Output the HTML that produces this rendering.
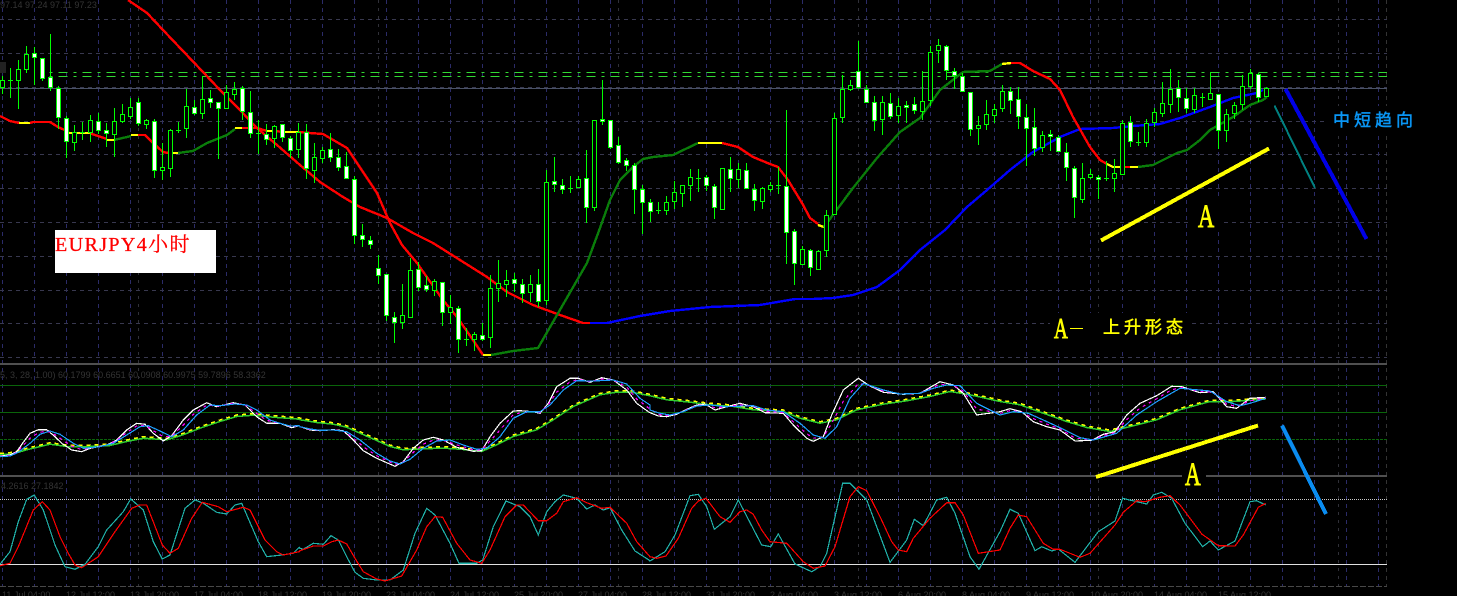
<!DOCTYPE html>
<html><head><meta charset="utf-8"><title>EURJPY</title>
<style>
html,body{margin:0;padding:0;background:#000;width:1457px;height:596px;overflow:hidden}
svg{position:absolute;left:0;top:0;display:block}
.d{font-family:"Liberation Sans",sans-serif;font-size:9px;fill:#343434}
.c{font-family:"Liberation Sans","Noto Sans CJK SC",sans-serif;font-size:17px;letter-spacing:4px;stroke-width:.5px}
</style></head><body>
<svg id="s" width="1457" height="596" viewBox="0 0 1457 596" xmlns="http://www.w3.org/2000/svg">
<rect width="1457" height="596" fill="#000"/>
<g id="grid" shape-rendering="crispEdges"></g>
<g id="ind" fill="none" shape-rendering="crispEdges"></g>
<g id="can" shape-rendering="crispEdges"></g>
<g id="osc" fill="none" shape-rendering="crispEdges"></g>
<text class="d" x="0" y="8">97.14 97.24 97.11 97.23</text>
<text class="d" x="0" y="378">5, 3, 28, 1.00) 60.1799 60.6651 60.0908 60.9975 59.7896 58.3362</text>
<text class="d" x="1" y="489">4.2616 27.1842</text>
<g class="d">
<text x="2" y="598">11 Jul 04:00</text><text x="66" y="598">12 Jul 12:00</text><text x="130" y="598">13 Jul 20:00</text><text x="194" y="598">17 Jul 04:00</text><text x="258" y="598">18 Jul 12:00</text><text x="322" y="598">19 Jul 20:00</text><text x="386" y="598">23 Jul 04:00</text><text x="450" y="598">24 Jul 12:00</text><text x="514" y="598">25 Jul 20:00</text><text x="578" y="598">27 Jul 04:00</text><text x="642" y="598">28 Jul 12:00</text><text x="706" y="598">31 Jul 20:00</text><text x="770" y="598">2 Aug 04:00</text><text x="834" y="598">3 Aug 12:00</text><text x="898" y="598">6 Aug 20:00</text><text x="962" y="598">8 Aug 04:00</text><text x="1026" y="598">9 Aug 12:00</text><text x="1090" y="598">10 Aug 20:00</text><text x="1154" y="598">14 Aug 04:00</text><text x="1218" y="598">15 Aug 12:00</text>
</g>
<rect x="1190" y="200" width="33" height="30" fill="#000"/>
<rect x="1182" y="458" width="24" height="30" fill="#000"/>
<rect x="1050" y="313" width="140" height="37" fill="#000"/>
<rect x="1325" y="106" width="90" height="29" fill="#000"/>
<g stroke-linecap="butt" shape-rendering="crispEdges">
<line x1="1101" y1="240.5" x2="1269" y2="148.5" stroke="#ffff00" stroke-width="4"/>
<line x1="1274.5" y1="105.5" x2="1315" y2="188" stroke="#008080" stroke-width="2"/>
<line x1="1285.5" y1="89" x2="1366.5" y2="239" stroke="#0000e6" stroke-width="4"/>
<line x1="1096" y1="477" x2="1258" y2="425.5" stroke="#ffff00" stroke-width="4"/>
<line x1="1282" y1="425.5" x2="1326" y2="514" stroke="#0a8cf0" stroke-width="4"/>
</g>
<text transform="translate(1198 227) scale(.68 1)" font-family="Liberation Serif" font-size="33" fill="#ffff00" stroke="#ffff00" stroke-width=".9">A</text>
<text transform="translate(1185 485) scale(.66 1)" font-family="Liberation Serif" font-size="33" fill="#ffff00" stroke="#ffff00" stroke-width=".9">A</text>
<text transform="translate(1054 338) scale(.66 1)" font-family="Liberation Serif" font-size="29" fill="#ffff00" stroke="#ffff00" stroke-width=".9">A</text>
<rect x="1070" y="328" width="13" height="1" fill="#ffff00"/>
<text class="c" x="1103" y="333" fill="#ffff00" stroke="#ffff00">上升形态</text>
<text class="c" x="1333" y="126" fill="#0a96f5" stroke="#0a96f5">中短趋向</text>
<rect x="55" y="230" width="161" height="43" fill="#fff"/>
<text x="55" y="251" fill="#f00" stroke="#f00" stroke-width=".3" font-family="'Liberation Serif','Noto Serif CJK SC',serif" font-size="20" letter-spacing="1.4">EURJPY4小时</text>
</svg>
<script>
var NS='http://www.w3.org/2000/svg';
function $(i){return document.getElementById(i)}
function el(p,n,a){var e=document.createElementNS(NS,n);for(var k in a)e.setAttribute(k,a[k]);$(p).appendChild(e);return e}
function R(p,x,y,w,h,f){el(p,'rect',{x:x,y:y,width:w,height:h,fill:f})}
// grid
var i;
for(i=0;i<44;i++){var x=2.5+32*i;if(x<1386)el('grid','line',{x1:x,y1:0,x2:x,y2:586,stroke:'#2b2b68','stroke-dasharray':'4 4'})}
[138.5,378.5,618.5,858.5,1098.5,1338.5].forEach(function(x){el('grid','line',{x1:x,y1:0,x2:x,y2:586,stroke:'#303038','stroke-dasharray':'3 5'})});
el('grid','line',{x1:1386.5,y1:0,x2:1386.5,y2:586,stroke:'#333','stroke-dasharray':'4 4'});
[19,53,87,121,154,188,222,256,290,323,357].forEach(function(y){el('grid','line',{x1:0,y1:y+.5,x2:1387,y2:y+.5,stroke:'#38384f','stroke-dasharray':'4 4'})});
R('grid',0,88,1387,1,'#4a5268');
[72,76].forEach(function(y){el('grid','line',{x1:49.7,y1:y+.5,x2:1387,y2:y+.5,stroke:'#32d932','stroke-dasharray':'3 6 9 6'})});
[363,364,475,476].forEach(function(y){R('grid',0,y,1387,1,'#505050')});
R('grid',0,385,1387,1,'#0a640a');R('grid',0,412,1387,1,'#0a640a');
el('grid','line',{x1:0,y1:439.5,x2:1387,y2:439.5,stroke:'#0a640a','stroke-dasharray':'3 1'});
el('grid','line',{x1:0,y1:499.5,x2:1387,y2:499.5,stroke:'#c8c8c8','stroke-dasharray':'1 1'});
R('grid',0,564,1387,1,'#e0e0e0');
el('grid','line',{x1:0,y1:586.5,x2:1387,y2:586.5,stroke:'#484848','stroke-dasharray':'6 2'});
R('grid',0,62,6,11,'#222');
// moving averages
function L(p,pts,col,w,dash){var a={points:pts.map(function(q){return q[0]+','+q[1]}).join(' '),stroke:col,'stroke-width':w};if(dash)a['stroke-dasharray']=dash;el(p,'polyline',a)}
L('ind',[[128,0],[147,13],[163,30],[182,50],[203,72],[220,90],[240,110],[257,128],[277,145],[300,165],[320,182],[343,197],[360,207],[387,218],[413,233],[433,243],[460,260],[487,277],[507,292],[533,305],[560,315],[583,323],[591,323]],'#f00',2.4);
L('ind',[[590,323],[607,323],[640,316],[670,311],[710,307],[760,305],[795,299],[813,299],[833,298],[853,295],[877,287],[900,270],[920,250],[945,230],[967,207],[987,190],[1010,170],[1033,152],[1060,137],[1080,129],[1113,128],[1133,126],[1160,124],[1180,118],[1210,107],[1233,98],[1257,93],[1263,90]],'#0000ff',2.4);
var R_='#f00',Y='#ff0',G='#0a7d0a';
[
[R_,[[0,116],[10,121],[19,123]]],[Y,[[19,123],[30,123]]],[R_,[[30,123],[33,122],[50,122],[58,127],[69,132]]],[Y,[[69,133],[90,133]]],[R_,[[90,133],[92,134],[107,139]]],[Y,[[107,140],[114,140]]],[G,[[114,140],[127,137],[131,136]]],[Y,[[131,135],[138,135]]],[R_,[[138,135],[145,135],[153,143],[163,152],[168,153]]],[Y,[[168,153],[178,153]]],[G,[[178,153],[193,151],[207,143],[227,135],[235,129]]],[Y,[[235,128],[242,128]]],[R_,[[242,128],[257,128],[267,131]]],[Y,[[267,131],[273,131]]],[R_,[[273,131],[285,132]]],[Y,[[285,132],[298,132]]],
[R_,[[298,132],[310,133],[323,134],[347,148],[363,172],[377,193],[390,223],[402,245],[417,263],[443,300],[457,317],[473,340],[483,355]]],[Y,[[483,355],[491,355]]],[G,[[491,355],[513,351],[538,348],[557,315],[587,263],[600,228],[610,200],[620,180],[633,167],[643,159],[653,157],[673,155],[698,143]]],[Y,[[698,143],[722,143]]],[R_,[[722,143],[738,147],[753,157],[770,164],[778,167],[788,180],[802,203],[810,218],[818,224]]],[Y,[[818,225],[824,227]]],[G,[[824,227],[853,188],[877,158],[900,132],[920,118],[940,90],[963,72],[990,71],[1002,64]]],[Y,[[1002,64],[1011,63]]],[R_,[[1011,63],[1020,63],[1033,71],[1050,79],[1060,90],[1073,117],[1090,147],[1100,160],[1107,164]]],[Y,[[1107,164],[1113,167],[1120,167]]],[R_,[[1120,167],[1130,167]]],[Y,[[1130,167],[1138,167]]],[G,[[1138,167],[1153,165],[1177,153],[1187,150],[1200,140],[1210,130],[1233,117],[1250,105],[1263,100],[1267,97]]]
].forEach(function(s){L('ind',s[1],s[0],2.4)});
// candles
var k=0;
function c(off,a){a.forEach(function(d){var x=8*k,t=function(v){return Math.round(off+v/3)};var hi=t(d[0]),top=t(d[1]),bot=t(d[2]),lo=t(d[3]);
R('can',x+2,hi,1,Math.max(lo-hi,1),'#00ff00');
var h=bot-top;if(h<1){R('can',x,top,5,1,'#00ff00')}else{R('can',x,top,5,h+1,'#00ff00');if(h>=2)R('can',x+1,top+1,3,h-1,d[4]?'#fff':'#000')}
k++})}
c(0,[[228,240,262,282,0],[205,240,240,293,0],[180,208,241,327,0],[138,163,208,218,0],[142,160,170,255,1],[175,175,235,242,1],[102,231,262,273,1],[258,265,352,388,1],[348,355,424,473,1],[375,397,427,452,0],[365,397,397,420,0],[345,361,397,427,0],[340,364,391,402,1],[370,391,400,440,1],[324,364,403,470,0],[312,343,362,368,0],[295,322,347,358,0],[295,307,370,379,1],[358,361,373,387,0],[358,364,511,533,1],[430,502,509,540,0],[388,391,505,532,0],[367,389,389,398,0],[267,319,385,413,0],[300,322,340,345,1],[229,298,338,357,0],[270,295,307,325,1],[307,307,325,477,1],[255,277,323,325,0],[246,268,281,300,0],[257,265,333,360,1],[274,337,400,413,1],[361,400,400,462,0],[372,403,417,435,1],[375,379,415,443,0],[372,373,412,425,1],[408,415,451,473,1],[370,397,448,475,0]]);
c(100,[[72,95,205,237,1],[130,172,209,248,0],[140,151,173,190,0],[100,148,170,187,1],[148,172,202,212,1],[157,199,235,238,1],[228,238,406,432,1],[373,406,418,440,1],[408,421,433,447,1],[465,505,526,552,1],[523,523,646,664,1],[636,650,665,728,1],[552,646,667,687,0],[474,511,650,652,0],[487,508,560,574,1],[529,556,566,575,1],[537,544,569,588,0],[545,547,637,678,1],[585,622,637,672,0],[618,625,718,760,1],[685,718,718,738,0],[697,703,716,752,0],[670,706,716,722,1],[525,565,712,744,0],[480,550,563,606,0],[510,541,553,590,0],[518,538,550,575,1],[537,553,580,608,1],[525,553,577,605,0],[507,553,604,620,1],[210,247,601,615,0],[171,244,253,275,1],[237,256,268,282,1],[228,263,263,280,0],[229,238,260,265,0],[150,235,322,370,1],[60,61,320,333,0]]);
c(30,[[150,268,274,285,1],[270,270,350,356,1],[321,346,395,402,1],[385,391,406,423,1],[400,404,478,552,1],[466,476,517,612,1],[507,517,542,575,1],[517,539,539,551,0],[499,517,539,555,0],[454,487,514,538,0],[466,466,490,530,0],[418,442,466,512,0],[418,445,445,485,0],[436,442,466,482,1],[463,469,532,567,1],[415,415,536,538,0],[382,418,445,485,1],[400,418,448,475,0],[400,421,475,478,1],[463,478,511,542,1],[470,475,514,537,0],[457,466,478,485,0],[412,466,466,491,0],[240,469,607,702,1],[598,604,700,765,1],[649,658,703,706,0],[658,661,712,738,1],[661,664,716,719,0],[540,556,661,681,0],[250,265,553,556,0],[135,178,262,278,0],[150,166,176,183,0],[33,124,172,178,1],[166,176,217,220,1],[198,217,271,303,1],[198,217,268,315,0],[190,220,259,268,1],[205,229,256,280,0]]);
c(30,[[212,226,232,280,1],[202,223,241,252,1],[124,214,244,270,0],[48,65,211,228,0],[27,46,61,99,0],[46,49,121,150,1],[115,124,136,178,1],[130,139,184,187,1],[186,187,298,318,1],[259,286,295,345,0],[210,253,283,300,0],[222,238,256,280,0],[166,184,235,247,0],[172,184,211,252,1],[172,208,259,297,1],[222,262,295,408,1],[235,292,355,378,1],[303,316,352,365,0],[300,313,319,363,1],[316,322,364,366,1],[340,367,412,452,1],[408,415,502,563,1],[400,445,506,518,0],[418,433,442,448,0],[436,442,448,508,1],[394,445,445,452,0],[388,430,445,485,0],[270,280,433,436,0],[258,277,334,352,1],[305,337,337,347,0],[268,280,337,350,0],[235,247,277,292,0],[157,220,250,260,0],[118,178,223,250,0],[150,175,202,245,1],[175,205,235,250,1],[175,196,238,250,0]]);
c(50,[[130,140,140,170,0],[67,130,147,150,0],[133,133,241,297,1],[178,193,241,276,0],[157,166,190,206,0],[75,109,163,180,0],[58,70,109,116,0],[68,73,142,155,1],[112,115,139,142,0]]);
// oscillators
function Z(xo,yo,a){return a.map(function(p){return [+(xo+p[0]/3).toFixed(1),+(yo+p[1]/3).toFixed(1)]})}
function join(){var r=[];for(var j=0;j<arguments.length;j++)r=r.concat(arguments[j]);return r}
var W=join(Z(0,355,[[0,303],[30,300],[50,290],[70,262],[90,235],[115,224],[140,224],[165,245],[185,265],[215,285],[245,290],[270,280],[320,270],[350,255],[380,225],[410,205],[435,208],[460,235],[490,258],[515,242],[550,195],[580,165],[620,143],[650,155],[700,143],[735,150],[770,185],[800,205],[840,205],[875,218],[898,212]]),
Z(300,360,[[0,200],[30,210],[60,212],[100,209],[130,212],[160,240],[190,272],[230,295],[285,319],[310,305],[340,265],[370,240],[400,232],[430,240],[470,262],[520,274],[545,272],[570,230],[600,190],[640,153],[660,152],[700,155],[720,160],[745,130],[770,80],[810,55],[835,55],[870,67],[905,53],[940,60],[980,90],[1010,130],[1045,155]]),
Z(650,360,[[0,158],[25,168],[50,170],[80,163],[110,148],[140,135],[165,132],[195,150],[230,140],[270,130],[310,140],[345,158],[400,160],[430,195],[470,235],[490,244],[520,230],[545,165],[580,90],[625,55],[660,78],[700,97],[760,103],[810,100],[870,65],[910,75],[940,100],[980,165]]),
Z(1000,355,[[0,170],[30,161],[65,170],[100,200],[140,215],[180,225],[225,258],[275,256],[310,238],[345,230],[380,180],[420,145],[470,122],[515,94],[545,95],[600,113],[640,110],[680,155],[710,160],[750,130],[797,127]]));
var B=join(Z(0,355,[[0,305],[30,303],[55,292],[90,265],[120,238],[150,228],[180,238],[220,265],[250,280],[300,275],[340,265],[380,240],[420,215],[445,212],[480,228],[515,245],[550,225],[590,180],[630,150],[660,152],[705,147],[740,150],[770,165],[810,195],[840,205],[870,213],[898,212]]),
Z(300,360,[[0,200],[30,207],[60,211],[100,210],[140,215],[180,240],[230,280],[270,303],[300,312],[330,298],[370,265],[410,243],[450,240],[490,255],[530,268],[560,265],[600,230],[640,175],[680,155],[720,155],[750,135],[790,90],[830,62],[880,63],[940,60],[980,72],[1020,115],[1050,135]]),
Z(650,360,[[0,150],[30,160],[60,165],[100,155],[140,138],[180,135],[230,140],[310,137],[350,150],[400,155],[450,190],[490,225],[525,235],[560,200],[600,115],[640,70],[700,90],[750,102],[810,100],[850,85],[890,75],[930,77],[980,130]]),
Z(1000,355,[[0,180],[40,170],[85,175],[130,195],[180,218],[240,248],[280,255],[350,235],[410,180],[470,140],[540,100],[630,108],[680,140],[720,152],[750,145],[797,130]]));
var YL=join(Z(0,355,[[0,295],[40,292],[80,280],[150,263],[200,270],[270,270],[330,267],[380,255],[430,245],[500,250],[550,235],[600,215],[660,195],[710,180],[760,176],[820,182],[898,188]]),
Z(300,360,[[0,175],[50,183],[100,188],[140,197],[180,215],[230,237],[270,255],[310,265],[370,262],[430,260],[480,263],[545,270],[590,250],[640,225],[710,205],[760,175],[820,135],[900,100],[950,92],[1000,93],[1050,103]]),
Z(650,360,[[0,103],[50,115],[120,122],[180,130],[250,135],[310,145],[400,150],[450,170],[510,185],[560,175],[620,145],[700,128],[770,118],[840,105],[900,90],[960,100]]),
Z(1000,355,[[0,135],[60,145],[130,170],[200,195],[260,213],[330,225],[400,208],[470,190],[540,160],[630,135],[700,135],[797,128]]));
function interp(a,x){for(var j=1;j<a.length;j++){if(a[j][0]>=x){var t=(x-a[j-1][0])/((a[j][0]-a[j-1][0])||1);return a[j-1][1]+t*(a[j][1]-a[j-1][1])}}return a[a.length-1][1]}
var M=W.map(function(p){return [p[0],+((p[1]+interp(B,p[0]))/2).toFixed(1)]});
L('osc',YL,'#ffff00',1.5,'4 4');
L('osc',YL.map(function(p){return [p[0],p[1]+1.5]}),'#2ecc2e',1.5);
L('osc',W,'#ffffff',1.2);
L('osc',M,'#ff00ff',1.2,'3 4');
L('osc',B,'#1ea0ff',1.2);
var T=join(Z(0,355,[[0,628],[30,590],[55,500],[80,433],[103,420],[130,465],[165,570],[195,635],[225,643],[255,628],[295,575],[320,525],[370,470],[392,432],[430,465],[460,560],[487,612],[510,600],[555,460],[585,435],[610,445],[650,472],[680,477],[705,450],[725,445],[775,560],[800,605],[845,600],[880,595],[898,577]]),
Z(300,360,[[0,565],[10,568],[40,550],[70,553],[93,527],[115,540],[140,590],[165,637],[190,655],[230,660],[270,660],[310,630],[345,520],[380,445],[405,465],[450,550],[477,610],[530,610],[548,600],[580,500],[618,423],[660,440],[690,470],[715,525],[740,455],[765,425],[790,405],[830,415],[860,447],[885,435],[910,450],[930,443],[965,510],[1005,573],[1050,602]]),
Z(650,360,[[0,603],[45,575],[75,525],[120,407],[145,403],[170,440],[193,508],[240,470],[265,420],[335,555],[362,560],[385,522],[435,612],[485,635],[510,620],[530,580],[578,370],[600,370],[650,420],[720,607],[770,540],[793,478],[820,497],[860,420],[890,412],[915,460],[960,590],[987,628]]),
Z(1000,355,[[0,530],[30,463],[55,475],[105,587],[125,575],[155,588],[175,582],[225,622],[295,530],[345,498],[368,430],[410,440],[440,447],[460,420],[485,412],[515,430],[555,505],[608,575],[630,558],[655,585],[705,558],[750,440],[770,437],[797,450]]));
var Rd=join(Z(0,355,[[0,632],[30,625],[55,575],[100,465],[127,440],[150,465],[180,545],[205,595],[225,630],[245,638],[295,605],[345,530],[395,460],[420,450],[440,450],[487,570],[510,595],[535,580],[575,490],[607,442],[655,455],[680,470],[730,457],[750,465],[795,555],[830,590],[850,600],[898,590]]),
Z(300,360,[[0,572],[40,558],[70,558],[95,545],[115,540],[140,552],[165,595],[190,635],[230,657],[255,663],[305,648],[350,570],[380,500],[405,470],[428,472],[470,550],[510,600],[545,610],[570,570],[615,470],[650,435],[670,435],[715,482],[740,482],[770,460],[790,425],[830,413],[860,428],[905,445],[930,442],[980,490],[1010,545],[1050,590]]),
Z(650,360,[[0,590],[20,595],[48,588],[85,535],[125,445],[145,423],[168,415],[210,470],[240,487],[270,455],[290,450],[310,463],[335,510],[360,545],[410,550],[460,605],[490,625],[525,618],[555,560],[600,410],[625,380],[650,392],[690,470],[725,545],[745,570],[770,575],[790,535],[840,475],[890,428],[915,428],[940,465],[985,580]]),
Z(1000,355,[[0,585],[30,520],[55,480],[80,485],[130,565],[160,583],[180,583],[240,607],[270,595],[345,510],[370,472],[410,437],[435,440],[480,427],[510,422],[540,450],[605,537],[655,572],[705,573],[730,540],[775,457],[797,445]]));
L('osc',T,'#20b2aa',1.2);
L('osc',Rd,'#ff0000',1.2);
</script>
</body></html>
